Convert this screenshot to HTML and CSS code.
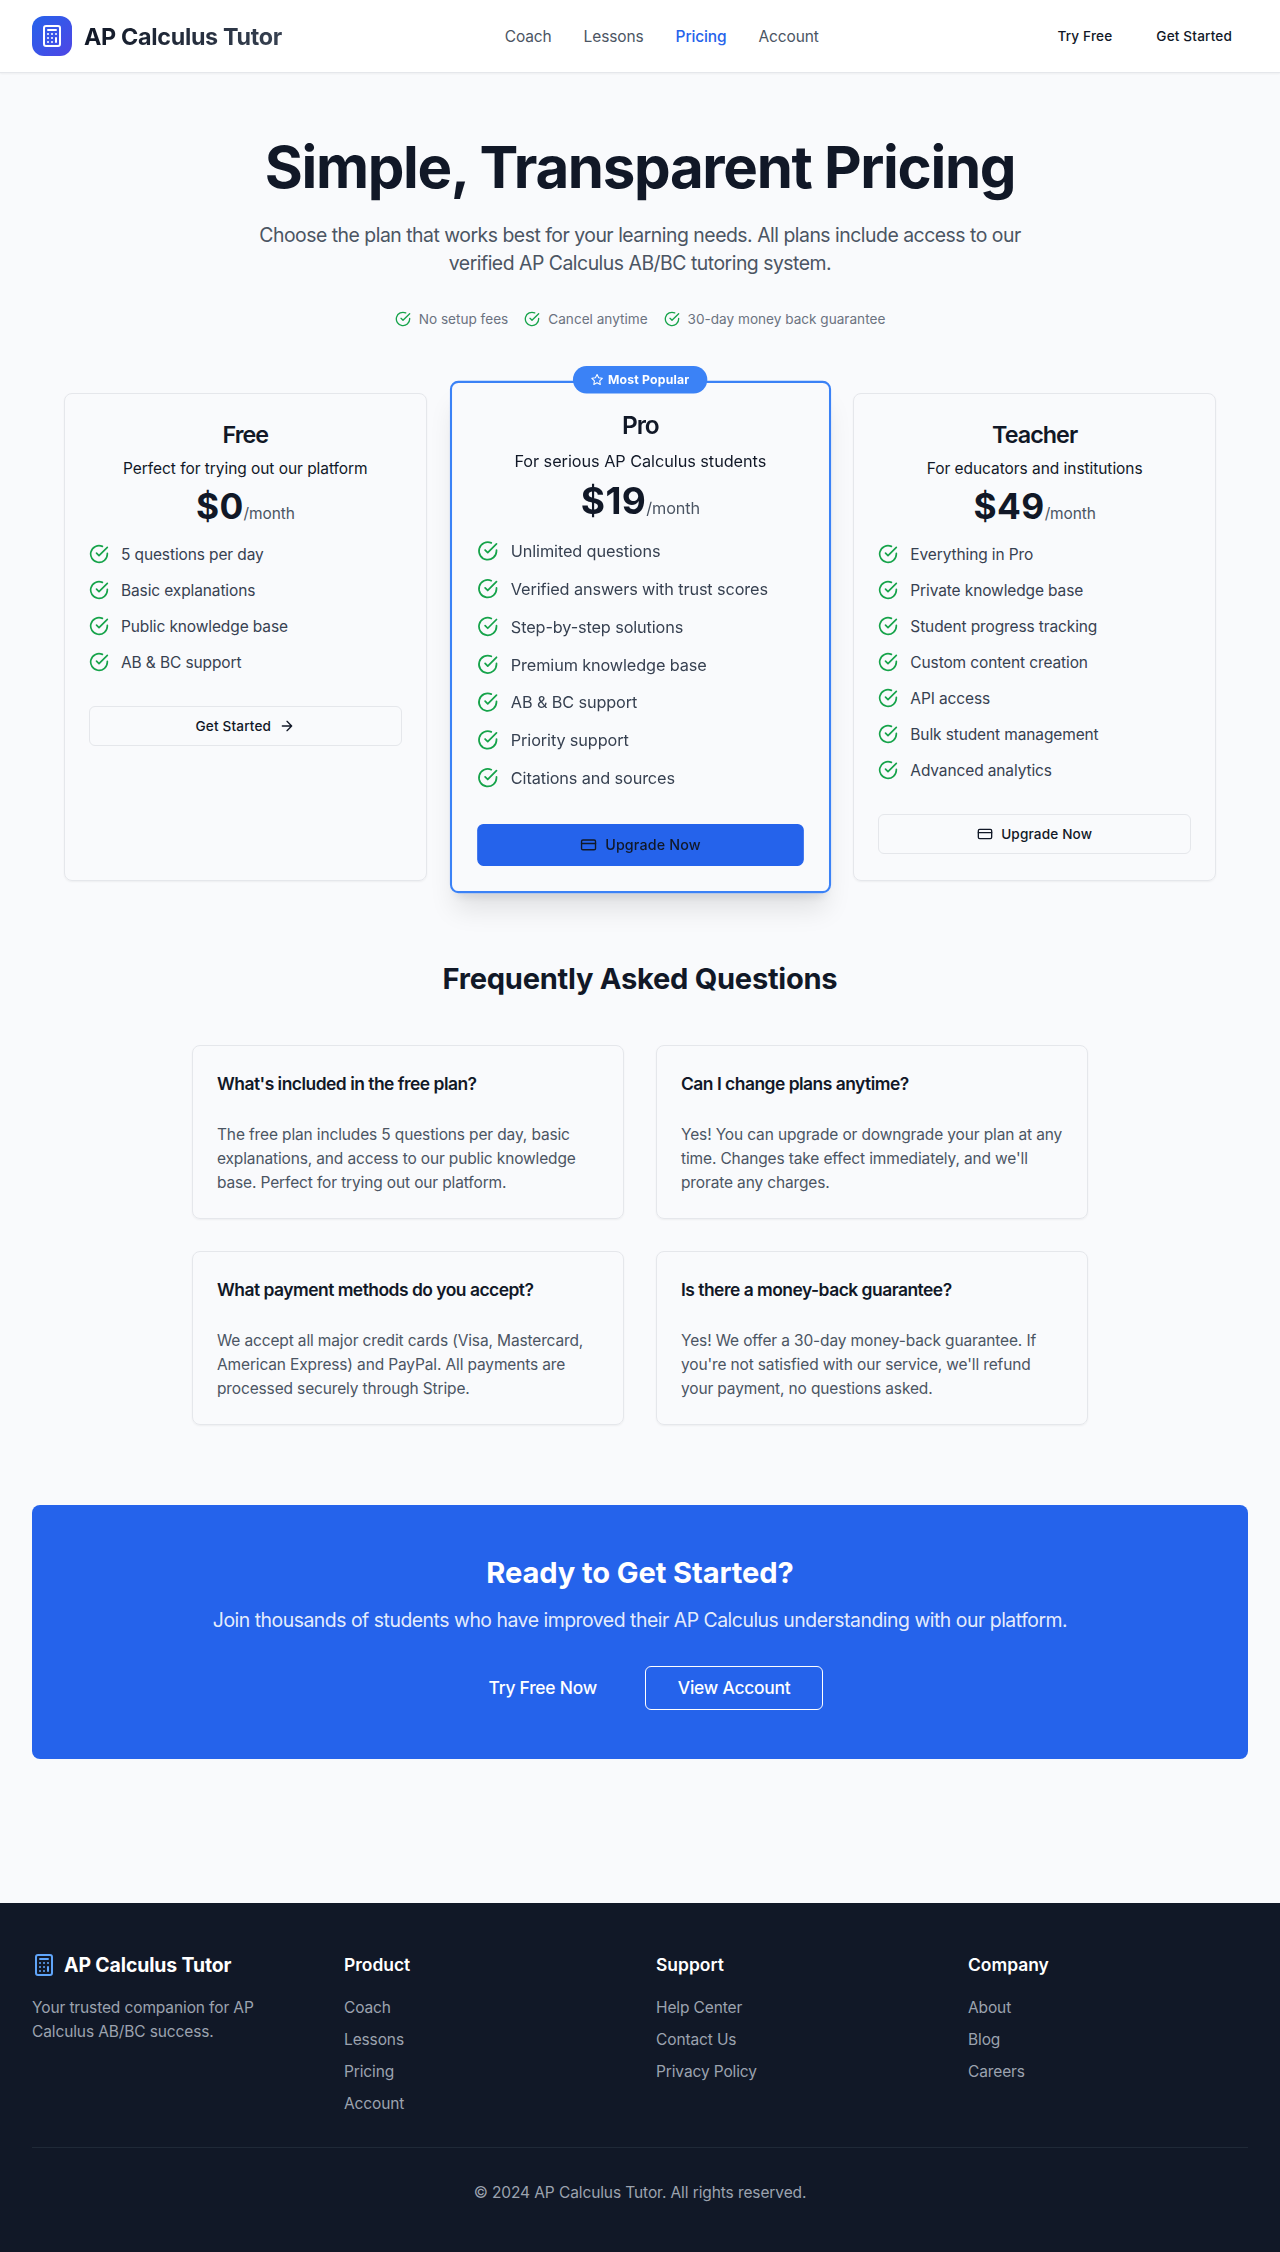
FILE: index.html
```html
<!DOCTYPE html>
<html lang="en">
<head>
<meta charset="utf-8">
<title>AP Calculus Tutor - Pricing</title>
<link rel="stylesheet" href="styles.css">
</head>
<body>
<svg class="sprite" aria-hidden="true">
  <symbol id="i-calc" viewBox="0 0 24 24"><rect width="16" height="20" x="4" y="2" rx="2"/><path d="M8 6h8M16 14v4M16 10h.01M12 10h.01M8 10h.01M12 14h.01M8 14h.01M12 18h.01M8 18h.01"/></symbol>
  <symbol id="i-check" viewBox="0 0 24 24"><path d="M22 11.08V12a10 10 0 1 1-5.93-9.14"/><path d="m9 11 3 3L22 4"/></symbol>
  <symbol id="i-arrow" viewBox="0 0 24 24"><path d="M5 12h14M12 5l7 7-7 7"/></symbol>
  <symbol id="i-card" viewBox="0 0 24 24"><rect width="20" height="14" x="2" y="5" rx="2"/><path d="M2 10h20"/></symbol>
  <symbol id="i-star" viewBox="0 0 24 24"><path d="M12 2l3.09 6.26L22 9.27l-5 4.87 1.18 6.88L12 17.77l-6.18 3.25L7 14.14 2 9.27l6.91-1.01L12 2z"/></symbol>
</svg>

<header class="header">
  <a class="brand"><span class="brand-mark"><svg class="icon"><use href="#i-calc"/></svg></span><span class="brand-name">AP Calculus Tutor</span></a>
  <nav class="nav"><a>Coach</a><a>Lessons</a><a class="active">Pricing</a><a>Account</a></nav>
  <div class="header-actions"><a class="btn-sm">Try Free</a><a class="btn-sm">Get Started</a></div>
</header>

<main class="main">
  <section class="hero">
    <h1>Simple, Transparent Pricing</h1>
    <p class="lead">Choose the plan that works best for your learning needs. All plans include access to our<br>verified AP Calculus AB/BC tutoring system.</p>
    <ul class="perks">
      <li><svg class="icon"><use href="#i-check"/></svg><span>No setup fees</span></li>
      <li><svg class="icon"><use href="#i-check"/></svg><span>Cancel anytime</span></li>
      <li><svg class="icon"><use href="#i-check"/></svg><span>30-day money back guarantee</span></li>
    </ul>
  </section>

  <section class="plans">
    <article class="card plan">
      <h3>Free</h3>
      <p class="plan-desc">Perfect for trying out our platform</p>
      <p class="price"><strong>$0</strong><span>/month</span></p>
      <ul class="features">
        <li><svg class="icon"><use href="#i-check"/></svg><span>5 questions per day</span></li>
        <li><svg class="icon"><use href="#i-check"/></svg><span>Basic explanations</span></li>
        <li><svg class="icon"><use href="#i-check"/></svg><span>Public knowledge base</span></li>
        <li><svg class="icon"><use href="#i-check"/></svg><span>AB &amp; BC support</span></li>
      </ul>
      <a class="btn"><span>Get Started</span><svg class="icon"><use href="#i-arrow"/></svg></a>
    </article>
    <article class="card plan featured">
      <div class="badge"><svg class="icon"><use href="#i-star"/></svg><span>Most Popular</span></div>
      <h3>Pro</h3>
      <p class="plan-desc">For serious AP Calculus students</p>
      <p class="price"><strong>$19</strong><span>/month</span></p>
      <ul class="features">
        <li><svg class="icon"><use href="#i-check"/></svg><span>Unlimited questions</span></li>
        <li><svg class="icon"><use href="#i-check"/></svg><span>Verified answers with trust scores</span></li>
        <li><svg class="icon"><use href="#i-check"/></svg><span>Step-by-step solutions</span></li>
        <li><svg class="icon"><use href="#i-check"/></svg><span>Premium knowledge base</span></li>
        <li><svg class="icon"><use href="#i-check"/></svg><span>AB &amp; BC support</span></li>
        <li><svg class="icon"><use href="#i-check"/></svg><span>Priority support</span></li>
        <li><svg class="icon"><use href="#i-check"/></svg><span>Citations and sources</span></li>
      </ul>
      <a class="btn"><svg class="icon"><use href="#i-card"/></svg><span>Upgrade Now</span></a>
    </article>
    <article class="card plan">
      <h3>Teacher</h3>
      <p class="plan-desc">For educators and institutions</p>
      <p class="price"><strong>$49</strong><span>/month</span></p>
      <ul class="features">
        <li><svg class="icon"><use href="#i-check"/></svg><span>Everything in Pro</span></li>
        <li><svg class="icon"><use href="#i-check"/></svg><span>Private knowledge base</span></li>
        <li><svg class="icon"><use href="#i-check"/></svg><span>Student progress tracking</span></li>
        <li><svg class="icon"><use href="#i-check"/></svg><span>Custom content creation</span></li>
        <li><svg class="icon"><use href="#i-check"/></svg><span>API access</span></li>
        <li><svg class="icon"><use href="#i-check"/></svg><span>Bulk student management</span></li>
        <li><svg class="icon"><use href="#i-check"/></svg><span>Advanced analytics</span></li>
      </ul>
      <a class="btn"><svg class="icon"><use href="#i-card"/></svg><span>Upgrade Now</span></a>
    </article>
  </section>

  <section class="faq">
    <h2>Frequently Asked Questions</h2>
    <div class="faq-grid">
      <article class="card"><h4>What's included in the free plan?</h4><p>The free plan includes 5 questions per day, basic<br>explanations, and access to our public knowledge<br>base. Perfect for trying out our platform.</p></article>
      <article class="card"><h4>Can I change plans anytime?</h4><p>Yes! You can upgrade or downgrade your plan at any<br>time. Changes take effect immediately, and we'll<br>prorate any charges.</p></article>
      <article class="card"><h4>What payment methods do you accept?</h4><p>We accept all major credit cards (Visa, Mastercard,<br>American Express) and PayPal. All payments are<br>processed securely through Stripe.</p></article>
      <article class="card"><h4>Is there a money-back guarantee?</h4><p>Yes! We offer a 30-day money-back guarantee. If<br>you're not satisfied with our service, we'll refund<br>your payment, no questions asked.</p></article>
    </div>
  </section>

  <section class="cta">
    <h2>Ready to Get Started?</h2>
    <p>Join thousands of students who have improved their AP Calculus understanding with our platform.</p>
    <div class="cta-actions"><a class="btn-lg">Try Free Now</a><a class="btn-lg outlined">View Account</a></div>
  </section>
</main>

<footer class="footer">
  <div class="footer-grid">
    <div>
      <div class="footer-brand"><svg class="icon"><use href="#i-calc"/></svg><span>AP Calculus Tutor</span></div>
      <p>Your trusted companion for AP<br>Calculus AB/BC success.</p>
    </div>
    <div><h5>Product</h5><ul><li>Coach</li><li>Lessons</li><li>Pricing</li><li>Account</li></ul></div>
    <div><h5>Support</h5><ul><li>Help Center</li><li>Contact Us</li><li>Privacy Policy</li></ul></div>
    <div><h5>Company</h5><ul><li>About</li><li>Blog</li><li>Careers</li></ul></div>
  </div>
  <p class="copyright">© 2024 AP Calculus Tutor. All rights reserved.</p>
</footer>
</body>
</html>
```

FILE: styles.css
```css
*, *::before, *::after { box-sizing: border-box; }
body {
  margin: 0;
  background: #f9fafc;
  color: #111827;
  font: 400 15.5px/24px Inter, "Liberation Sans", sans-serif;
  letter-spacing: -.12px;
}
h1, h2, h3, h4, h5, p, ul { margin: 0; padding: 0; }
ul { list-style: none; }
.sprite { display: none; }
.icon {
  width: 24px;
  height: 24px;
  flex: none;
  fill: none;
  stroke: currentColor;
  stroke-width: 2;
  stroke-linecap: round;
  stroke-linejoin: round;
}

/* Header */
.header {
  height: 73px;
  padding: 0 32px;
  display: flex;
  align-items: center;
  justify-content: space-between;
  background: #fff;
  border-bottom: 1px solid #e5e7eb;
  box-shadow: 0 1px 2px rgba(0, 0, 0, .05);
}
.brand { display: flex; align-items: center; gap: 12px; }
.brand-mark {
  width: 40px;
  height: 40px;
  display: grid;
  place-items: center;
  border-radius: 12px;
  background: linear-gradient(135deg, #2563eb, #4f46e5);
  color: #fff;
}
.brand-name {
  padding-top: 2px;
  font-size: 23.3px;
  line-height: 32px;
  font-weight: 700;
  letter-spacing: -.3px;
  background: linear-gradient(90deg, #111827, #374151);
  -webkit-background-clip: text;
  background-clip: text;
  color: transparent;
}
.nav { padding-top: 2px; display: flex; gap: 32px; color: #4b5563; }
.nav .active { color: #2563eb; font-weight: 500; }
.header-actions { display: flex; gap: 12px; }
.btn-sm { padding: 0 16px; font-size: 13.6px; font-weight: 500; letter-spacing: .15px; }

/* Hero */
.main { padding: 64px 32px 144px; }
.hero { text-align: center; }
.hero h1 { font-size: 58.2px; line-height: 60px; font-weight: 700; letter-spacing: -1.33px; }
.lead { margin-top: 24px; font-size: 19.4px; line-height: 28px; letter-spacing: -.49px; color: #4b5563; }
.perks {
  margin-top: 32px;
  display: flex;
  justify-content: center;
  gap: 16px;
  font-size: 13.6px;
  line-height: 20px;
  letter-spacing: 0;
  color: #6b7280;
}
.perks li { display: flex; align-items: center; gap: 8px; }
.perks .icon { width: 16px; height: 16px; color: #16a34a; }

/* Cards */
.card {
  border: 1px solid #e5e7eb;
  border-radius: 8px;
  padding: 24px;
  box-shadow: 0 1px 2px rgba(0, 0, 0, .05);
}

/* Plans */
.plans {
  margin: 64px 32px 0;
  display: grid;
  grid-template-columns: repeat(3, 1fr);
  gap: 32px;
}
.plan { padding-top: 25px; text-align: center; }
.plan h3 { font-size: 23.3px; line-height: 32px; font-weight: 600; letter-spacing: -.95px; }
.plan-desc { margin-top: 6px; letter-spacing: -.05px; }
.price { margin-top: 6px; height: 40px; line-height: 40px; }
.price strong { font-size: 35.3px; font-weight: 700; letter-spacing: .4px; }
.price span { color: #4b5563; }
.features { margin-top: 15px; display: grid; gap: 12px; color: #374151; }
.features li { height: 24px; display: flex; align-items: center; gap: 12px; }
.features span { padding-top: 2px; }
.features .icon { width: 20px; height: 20px; color: #16a34a; }
.btn {
  margin-top: 32px;
  height: 40px;
  display: flex;
  align-items: center;
  justify-content: center;
  gap: 8px;
  border: 1px solid #e5e7eb;
  border-radius: 6px;
  font-size: 13.6px;
  font-weight: 500;
  letter-spacing: .15px;
}
.btn .icon { width: 16px; height: 16px; }
.featured {
  position: relative;
  border: 2px solid #3b82f6;
  transform: scale(1.05);
  box-shadow: 0 20px 25px -5px rgba(0, 0, 0, .1), 0 8px 10px -6px rgba(0, 0, 0, .1);
}
.featured .btn { background: #2563eb; border-color: #2563eb; }
.badge {
  position: absolute;
  top: -16px;
  left: 50%;
  transform: translateX(-50%);
  height: 26px;
  padding: 0 17px;
  display: flex;
  align-items: center;
  gap: 4px;
  border-radius: 13px;
  background: #3b82f6;
  color: #fff;
  font-size: 11.65px;
  line-height: 16px;
  font-weight: 700;
  letter-spacing: .2px;
  white-space: nowrap;
}
.badge .icon { width: 12px; height: 12px; }

/* FAQ */
.faq { width: 896px; margin: 80px auto 0; }
.faq h2 { text-align: center; font-size: 29.1px; line-height: 36px; font-weight: 700; letter-spacing: -.27px; }
.faq-grid { margin-top: 48px; display: grid; grid-template-columns: repeat(2, minmax(0, 1fr)); gap: 32px; }
.faq .card { padding-bottom: 23px; }
.faq h4 { font-size: 17.46px; line-height: 28px; font-weight: 600; letter-spacing: -.51px; }
.faq .card p { margin-top: 25px; color: #4b5563; letter-spacing: -.14px; white-space: nowrap; }

/* Call to action */
.cta {
  margin-top: 80px;
  padding: 50px 49px 49px;
  border-radius: 8px;
  background: #2563eb;
  color: #fff;
  text-align: center;
}
.cta h2 { font-size: 29.1px; line-height: 36px; font-weight: 700; letter-spacing: -.1px; }
.cta p { margin-top: 15px; font-size: 19.4px; line-height: 28px; letter-spacing: -.48px; color: rgba(255, 255, 255, .9); }
.cta-actions { margin-top: 32px; display: flex; justify-content: center; gap: 16px; }
.btn-lg {
  height: 44px;
  padding: 0 32px;
  display: flex;
  align-items: center;
  border-radius: 6px;
  font-size: 17.46px;
  font-weight: 500;
  letter-spacing: -.25px;
}
.outlined { border: 1px solid #fff; }

/* Footer */
.footer { padding: 48px 32px 47px; background: #111827; color: #9ca3af; }
.footer-grid { display: grid; grid-template-columns: repeat(4, 1fr); gap: 32px; }
.footer-brand { display: flex; align-items: center; gap: 8px; color: #fff; font-size: 19.4px; line-height: 28px; font-weight: 700; letter-spacing: -.1px; }
.footer-brand .icon { color: #60a5fa; }
.footer-grid p, .footer-grid ul { margin-top: 17px; }
.footer-grid ul { display: grid; gap: 8px; }
.footer h5 { color: #fff; font-size: 17.46px; line-height: 28px; font-weight: 600; letter-spacing: 0; }
.copyright { margin-top: 31px; padding-top: 33px; border-top: 1px solid #1f2937; text-align: center; letter-spacing: -.1px; }
```
